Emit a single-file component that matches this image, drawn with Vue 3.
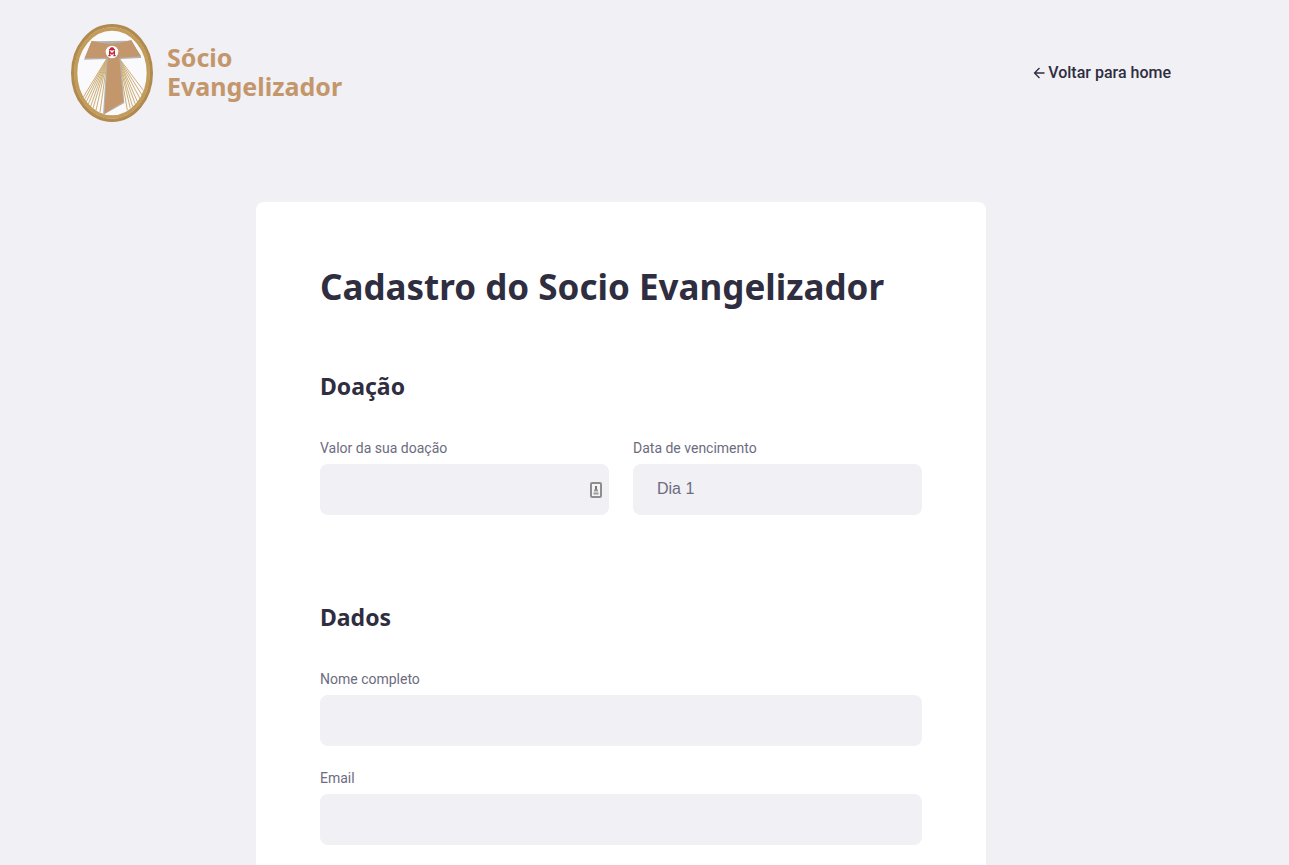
<script setup>
import { ref } from 'vue'

const amount = ref('')
const dueDay = ref('1')
const name = ref('')
const email = ref('')
const days = Array.from({ length: 28 }, (_, i) => String(i + 1))

const leftRays = [[70, 246], [74, 253], [79, 260], [85, 267], [92, 274], [99, 280], [108, 286], [120, 291]]
const rightRays = [[250, 226], [246, 240], [240, 251], [233, 262], [226, 268], [218, 275], [211, 280], [202, 285]]
</script>

<template>
  <div class="page">
    <header class="header">
      <a class="brand" href="#">
        <svg class="emblem" viewBox="33 27 246 294" aria-hidden="true">
          <ellipse cx="156" cy="174" rx="107" ry="130" fill="#fafafc" />
          <g stroke="#cdae74" stroke-width="3">
            <line v-for="(r, i) in leftRays" :key="'l' + i" x1="142" :y1="128 + i" :x2="r[0]" :y2="r[1]" />
            <line v-for="(r, i) in rightRays" :key="'r' + i" x1="176" :y1="128 + i" :x2="r[0]" :y2="r[1]" />
          </g>
          <ellipse cx="156" cy="174" rx="118" ry="142" fill="none" stroke="#b08a4e" stroke-width="10" />
          <ellipse cx="156" cy="174" rx="109" ry="132" fill="none" stroke="#c39c5c" stroke-width="10" />
          <path fill="#b5b2ae" d="M95 79L72 134L140 132L129 300L193 264L182 132L243 129L243 122L213 77Z" />
          <path fill="#c3976b" d="M95 77Q155 96 214 75L242 124L178 128L190 260L133 296L143 128L74 129Z" />
          <circle cx="156" cy="111" r="19" fill="#fff" />
          <path d="M149 122V110L156 117L163 110V122M145 122H152M160 122H167M156 96V107M150 100H162M147 104H165" fill="none" stroke="#c4283c" stroke-width="4" />
        </svg>
        <span class="brand-name">Sócio<br />Evangelizador</span>
      </a>
      <a class="back" href="#">
        <svg viewBox="0 0 12 12" aria-hidden="true"><path d="M11.5 6H1.5M6.5 1L1.5 6L6.5 11" /></svg>
        Voltar para home
      </a>
    </header>

    <form class="card" @submit.prevent>
      <h1>Cadastro do Socio Evangelizador</h1>
      <section>
        <h2>Doação</h2>
        <div class="row">
          <div class="field">
            <label for="amount">Valor da sua doação</label>
            <div class="control">
              <input id="amount" v-model="amount" type="text" />
              <svg class="autofill" viewBox="0 0 12 16" aria-hidden="true">
                <rect x="1" y="1" width="10" height="14" rx="1" fill="#f4f4f4" stroke="#8e8e8e" stroke-width="2" />
                <path d="M6 4V8" stroke="#777" stroke-width="2" />
                <path d="M4 8.5H8M3.5 11.5H8.5" stroke="#999" stroke-width="2" />
              </svg>
            </div>
          </div>
          <div class="field">
            <label for="due">Data de vencimento</label>
            <select id="due" v-model="dueDay">
              <option v-for="d in days" :key="d" :value="d">Dia {{ d }}</option>
            </select>
          </div>
        </div>
      </section>
      <section>
        <h2>Dados</h2>
        <div class="field">
          <label for="name">Nome completo</label>
          <input id="name" v-model="name" type="text" />
        </div>
        <div class="field">
          <label for="email">Email</label>
          <input id="email" v-model="email" type="email" />
        </div>
      </section>
    </form>
  </div>
</template>

<style>
body {
  background: #f0f0f5;
}
</style>

<style scoped>
.page {
  box-sizing: border-box;
  min-height: 100vh;
  display: flex;
  flex-direction: column;
  align-items: center;
  padding: 24px 47px 0 0;
  background: #f0f0f5;
  color: #2f2d40;
  font-family: Roboto, sans-serif;
}
.header {
  width: 100%;
  max-width: 1100px;
  display: flex;
  align-items: center;
  justify-content: space-between;
}
a {
  color: inherit;
  text-decoration: none;
}
.brand {
  display: flex;
  align-items: center;
  gap: 14px;
  color: #c3976b;
}
.emblem {
  width: 82px;
  height: 98px;
}
.brand-name {
  padding-bottom: 2px;
  font: 700 25px/29px "Noto Sans", sans-serif;
}
.back {
  display: flex;
  align-items: center;
  gap: 3px;
  padding-bottom: 2px;
  font-size: 16px;
  font-weight: 500;
}
.back svg {
  width: 12px;
  height: 12px;
  margin-top: 2px;
  fill: none;
  stroke: currentColor;
  stroke-width: 1.3;
}
.card {
  box-sizing: border-box;
  width: 100%;
  max-width: 730px;
  flex: 1;
  margin-top: 80px;
  padding: 64px 64px 20px;
  background: #fff;
  border-radius: 8px 8px 0 0;
}
h1,
h2 {
  margin: 0;
  font-family: "Noto Sans", sans-serif;
  font-weight: 700;
}
h1 {
  font-size: 35px;
  line-height: 42px;
}
h2 {
  margin-bottom: 40px;
  font-size: 23px;
  line-height: 28px;
}
section {
  margin-top: 64px;
}
section + section {
  margin-top: 88px;
}
.row {
  display: flex;
  gap: 24px;
}
.field {
  flex: 1;
  display: flex;
  flex-direction: column;
  gap: 8px;
}
.field + .field {
  margin-top: 24px;
}
.row .field + .field {
  margin-top: 0;
}
label {
  font-size: 14px;
  line-height: 16px;
  color: #6c6c80;
}
.control {
  position: relative;
}
input,
select {
  box-sizing: border-box;
  display: block;
  width: 100%;
  height: 51px;
  padding: 0 24px 2px;
  border: 0;
  border-radius: 8px;
  background: #f0f0f5;
  color: #6c6c80;
  font: 16px "Liberation Sans", Arial, sans-serif;
  appearance: none;
}
.autofill {
  position: absolute;
  top: 18px;
  right: 7px;
  width: 12px;
  height: 16px;
}
</style>
